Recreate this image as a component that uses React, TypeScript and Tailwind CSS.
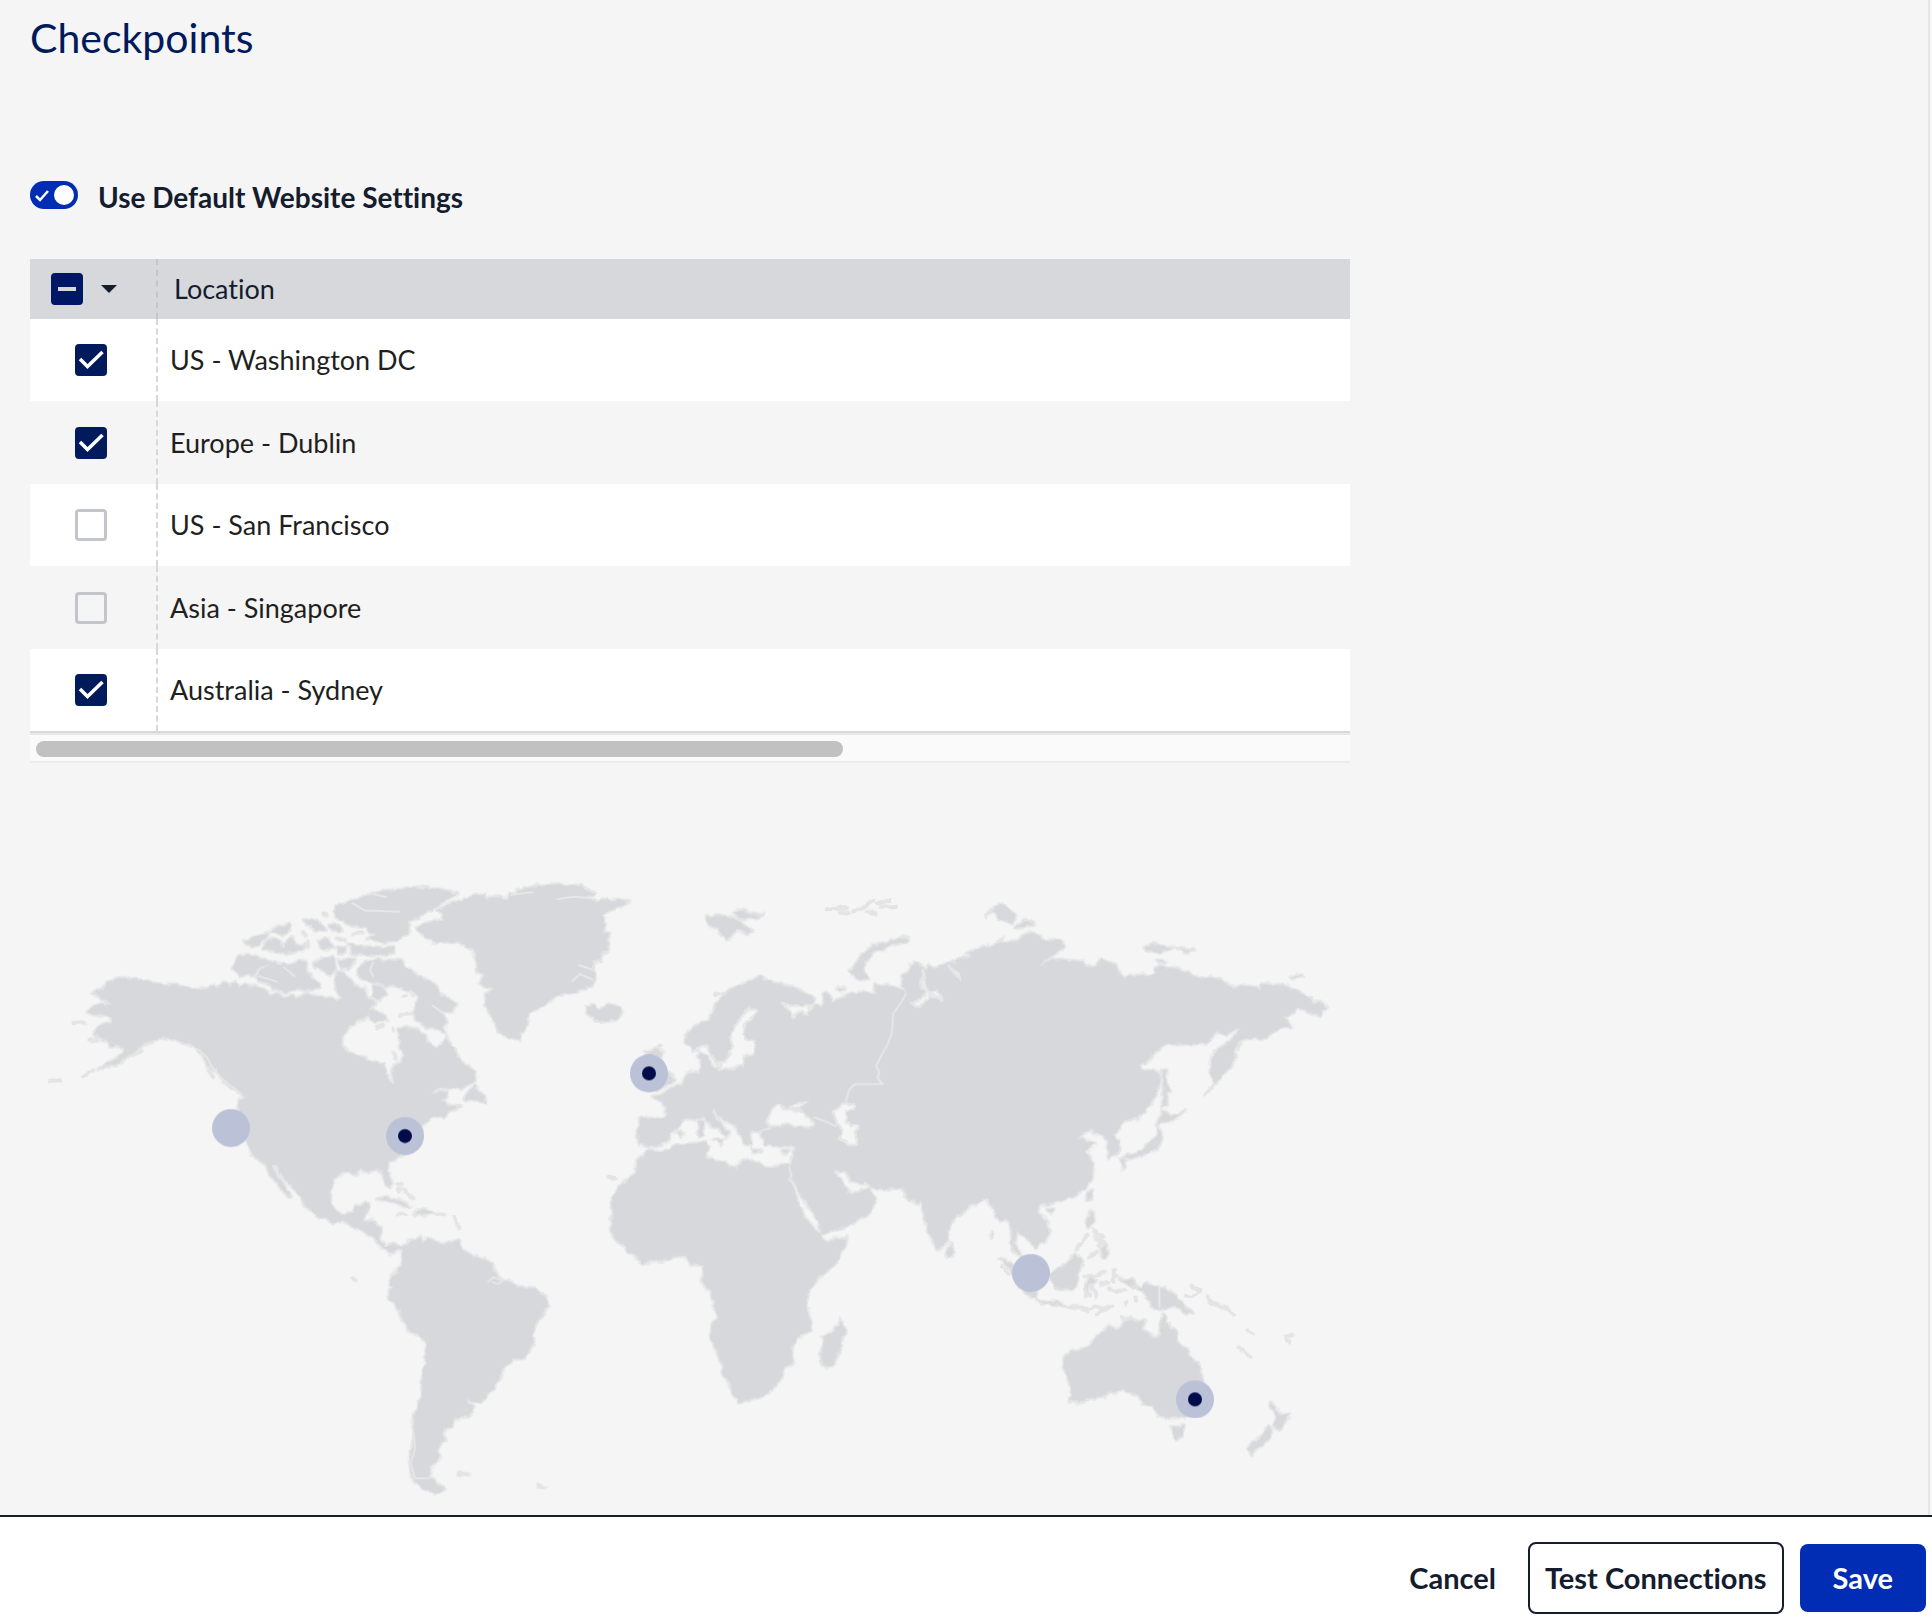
import { useEffect, useRef, useState } from 'react';

interface Checkpoint {
  id: string;
  name: string;
  enabled: boolean;
  x: number;
  y: number;
}

const CHECKPOINTS: Checkpoint[] = [
  { id: 'us-dc', name: 'US - Washington DC', enabled: true, x: 1125, y: 798 },
  { id: 'eu-dublin', name: 'Europe - Dublin', enabled: true, x: 1857, y: 610 },
  { id: 'us-sf', name: 'US - San Francisco', enabled: false, x: 603, y: 774 },
  { id: 'asia-sg', name: 'Asia - Singapore', enabled: false, x: 3003, y: 1209 },
  { id: 'au-sydney', name: 'Australia - Sydney', enabled: true, x: 3495, y: 1588 },
];

interface Region {
  origin: string;
  paths: string[];
}

// Land masses, each region drawn in its own local coordinates
const LAND: Region[] = [
  {
    // North America and the Arctic islands
    origin: 'translate(30 0)',
    paths: [
      'M258 320L272 330 290 326 310 336 330 335 365 344 400 343 440 352 472 362 480 354 500 356 520 346 535 350 558 334 570 350 582 338 595 350 620 345 650 350 680 362 690 375 720 374 740 382 760 378 764 386 800 372 830 380 870 382 893 394 903 380 890 365 885 335 890 308 905 304 925 325 945 350 975 358 980 380 1005 400 980 415 1000 425 975 445 950 455 920 480 905 505 905 525 925 552 960 558 1000 578 1035 585 1037 615 1055 640 1062 635 1055 605 1065 585 1085 578 1090 555 1078 530 1080 500 1075 475 1100 470 1130 480 1155 495 1167 520 1190 535 1208 520 1218 500 1235 528 1250 550 1258 572 1285 590 1305 605 1310 630 1285 642 1260 655 1225 652 1195 657 1170 677 1200 668 1225 665 1218 680 1205 690 1225 704 1250 710 1210 735 1175 738 1158 758 1150 765 1140 790 1100 850 1050 875 1040 900 1055 935 1050 955 1035 940 1028 908 1015 897 1000 902 960 900 948 912 930 905 910 905 880 928 875 960 870 990 885 1022 905 1035 940 1025 950 1003 985 1000 980 1025 967 1055 995 1053 1023 1070 1018 1105 1035 1130 1065 1122 1090 1142 1075 1142 1050 1147 1025 1130 1000 1100 980 1087 945 1075 915 1053 880 1057 830 1035 795 1012 792 990 770 965 745 940 720 910 705 886 694 890 710 915 735 950 750 978 738 975 722 955 708 935 692 918 686 905 670 878 640 855 625 820 604 780 598 715 595 688 612 680 590 660 560 645 540 618 530 600 515 600 505 588 490 560 470 535 440 518 400 508 365 500 340 515 305 525 285 545 250 570 210 588 175 597 215 575 250 550 255 532 235 526 215 530 205 515 185 510 160 490 175 470 212 455 214 440 190 432 165 435 140 425 155 410 190 402 215 403 190 390 180 375 155 370 190 355 200 340 225 330Z',
      'M595 258L625 254 650 260 680 270 700 278 665 290 650 300 640 318 615 312 600 318 580 300Z',
      'M655 305L690 282 705 275 740 290 765 280 775 272 800 275 798 300 815 325 835 340 840 355 800 362 770 352 740 366 700 358 690 345 655 335 650 320Z',
      'M880 125L900 102 925 98 945 90 975 78 1010 72 1040 62 1080 60 1100 54 1160 53 1205 62 1250 73 1210 95 1180 115 1150 135 1110 152 1105 185 1075 210 1030 215 980 205 1010 190 985 185 980 172 940 168 920 155 890 145Z',
      'M925 222L960 230 1030 232 1060 230 1062 248 1020 255 935 252Z',
      'M970 280L1000 270 1085 272 1095 290 1125 310 1165 335 1190 348 1195 368 1225 385 1250 402 1235 425 1205 425 1222 460 1210 468 1216 488 1185 478 1150 465 1125 445 1120 430 1130 405 1135 385 1115 365 1080 350 1050 350 990 335 960 325 955 300Z',
      'M612 218L640 200 685 188 680 205 655 220 640 232Z',
      'M690 183L720 168 750 163 748 182 725 193Z',
      'M668 235L690 205 715 215 728 232 755 200 765 225 795 225 790 240 735 250 695 243Z',
      'M790 150L830 150 858 180 830 180 805 165Z',
      'M820 280L845 266 880 265 888 300 870 315 850 300 828 295Z',
      'M895 268L945 266 925 295 905 295Z',
      'M835 212L865 206 878 235 845 235Z',
      'M865 165L900 170 905 182 875 180Z',
      'M888 232L915 230 912 248 895 252Z',
      'M990 415L1030 435 1040 450 1010 455 990 450Z',
      'M1000 345L1030 350 1040 372 1020 392 1000 385Z',
    ],
  },
  {
    // Greenland, Newfoundland, Iceland
    origin: 'translate(990 0)',
    paths: [
      'M172 172L200 158 250 150 245 130 230 120 262 105 290 95 310 85 340 78 370 75 375 90 388 80 410 78 440 88 445 72 480 72 470 62 520 50 560 44 600 42 660 48 705 68 680 80 715 100 740 90 808 95 770 112 740 125 725 138 735 160 730 185 745 190 738 215 745 240 720 255 722 270 700 275 700 300 706 328 695 345 650 365 595 373 580 388 540 412 510 430 500 455 485 485 475 512 440 500 415 480 395 450 385 420 372 405 376 375 400 358 372 350 360 338 372 315 355 310 350 270 338 240 315 224 285 215 215 215 188 195Z',
      'M312 688L330 660 348 645 352 660 375 678 376 698 350 690Z',
      'M242 735L270 715 305 710 270 726 250 740Z',
      'M690 440L678 430 680 408 700 408 715 418 745 405 770 410 788 428 770 445 735 455 705 448Z',
    ],
  },
  {
    // Europe, western Asia, India
    origin: 'translate(1650 0)',
    paths: [
      'M320 490L345 470 385 452 400 430 405 405 430 380 455 355 480 345 510 332 540 322 575 335 600 342 660 360 695 380 700 400 680 410 640 406 610 398 628 415 632 440 655 425 685 432 705 408 725 412 735 390 728 370 750 375 760 395 800 375 840 365 890 370 885 345 905 345 940 350 980 370 965 345 965 320 985 310 990 285 1005 277 1030 290 1032 305 1048 285 1060 300 1090 290 1100 280 1130 280 1150 265 1180 265 1160 250 1200 235 1260 222 1320 218 1320 985 1220 988 1175 998 1140 1030 1105 1060 1103 1115 1075 1140 1060 1115 1042 1075 1030 1030 1025 992 1010 1002 995 988 980 975 960 952 910 957 870 950 875 968 890 990 870 1025 820 1060 725 1092 715 1050 680 1000 650 950 630 922 630 885 645 825 620 828 600 832 585 825 555 825 545 800 548 782 515 780 505 795 512 825 500 825 485 800 470 775 440 755 412 735 403 715 396 728 415 752 448 785 440 806 425 785 395 770 370 738 345 748 310 745 300 765 270 792 262 808 245 822 205 830 192 822 178 822 172 790 180 745 215 742 252 745 258 715 245 695 215 680 240 676 255 668 285 650 305 642 325 608 360 605 365 590 355 560 360 545 380 525 335 542 322 520Z',
      'M380 140L430 138 455 145 480 155 520 185 505 195 470 175 445 208 425 195 410 175 385 165Z',
      'M460 130L485 120 505 130 550 132 520 145 480 145Z',
      'M806 308L830 280 850 250 880 225 930 215 980 202 985 212 920 230 880 245 855 275 850 305 865 328 830 325Z',
      'M240 600L262 605 275 622 285 632 262 645 230 660 215 640Z',
      'M195 545L225 535 248 550 235 570Z',
      'M358 752L370 752 370 795 358 798Z',
      'M400 808L428 812 425 824Z',
      'M290 788L310 787 302 798Z',
      'M512 838L545 843 520 848Z',
      'M605 845L628 840 615 852Z',
      'M770 355L795 355 785 365Z',
      'M1098 1150L1112 1120 1122 1145 1115 1160 1105 1162Z',
    ],
  },
  {
    // Africa and Madagascar
    origin: 'translate(1650 690)',
    paths: [
      'M205 150L222 152 250 152 290 135 345 130 380 128 388 140 378 168 410 182 430 185 450 200 470 208 485 182 510 180 540 195 570 202 600 196 627 195 632 220 625 240 650 290 665 335 690 375 722 402 730 422 800 412 795 440 770 485 720 530 680 580 680 610 690 650 690 690 650 715 630 745 640 790 612 800 605 835 570 875 540 895 500 900 475 908 460 885 455 865 430 820 420 770 392 715 395 680 412 650 405 610 390 575 365 545 372 495 330 488 315 468 290 468 245 483 225 480 190 488 165 470 135 450 125 430 98 405 92 380 100 340 95 305 110 270 130 245 165 220 170 185Z',
      'M783 658L795 690 778 750 760 795 740 803 727 795 722 765 732 740 728 710 765 690Z',
    ],
  },
  {
    // Eastern Asia and Japan
    origin: 'translate(2790 0)',
    paths: [
      'M-60 300L0 265 35 262 20 250 60 235 90 230 120 218 180 212 190 195 220 186 240 200 250 210 300 212 315 230 290 250 260 266 230 288 265 272 300 268 360 275 375 285 410 285 425 268 440 275 470 285 475 310 495 325 510 312 550 318 585 312 582 295 610 290 640 295 680 305 715 325 755 322 785 328 800 348 850 350 875 345 900 360 905 342 950 345 980 350 1020 370 1050 385 1060 402 1085 398 1105 410 1088 420 1080 438 1050 428 1035 418 1010 415 985 435 970 435 995 468 950 480 905 508 880 502 860 508 835 515 825 540 828 565 795 610 762 640 750 600 755 560 780 535 810 515 835 485 845 472 830 478 800 492 775 485 750 505 735 520 700 522 620 522 600 535 580 550 560 575 540 588 555 602 580 600 600 612 595 660 570 705 535 745 500 750 480 770 460 793 475 815 475 845 448 862 445 820 430 795 400 790 395 778 375 788 355 802 375 812 405 820 375 845 395 870 402 895 395 925 375 955 340 980 275 997 240 1005 232 1025 260 1055 268 1090 250 1115 225 1132 205 1105 170 1085 160 1120 185 1160 165 1150 155 1120 155 1080 140 1045 120 1055 100 1015 80 988 35 1000 0 1035 -100 1000Z',
      'M90 118L125 103 145 118 170 140 160 158 115 148 110 130Z',
      'M165 175L195 148 225 162 195 170Z',
      'M556 235L570 222 600 228 640 232 600 245 570 245Z',
      'M652 235L698 242 685 247Z',
      'M590 268L620 275 605 280Z',
      'M992 322L1012 314 1028 320Z',
      'M608 600L616 600 620 640 628 665 616 672 618 705 608 710 610 660Z',
      'M606 722L630 738 655 735 678 718 650 745 612 758 588 765 600 745Z',
      'M595 770L605 795 592 835 560 850 505 866 492 860 540 845 570 815 590 800Z',
      'M480 865L500 872 490 898 483 885Z',
      'M398 960L395 985 380 988 382 970Z',
      'M260 1015L282 1015 270 1032Z',
      'M398 1020L402 1055 385 1075 380 1050 388 1028Z',
      'M95 1085L97 1100 92 1105Z',
      'M425 1130L440 1125 443 1150 435 1165 422 1150Z',
    ],
  },
  {
    // South America and the Caribbean
    origin: 'translate(510 750)',
    paths: [
      'M605 392L612 380 625 365 650 358 662 350 668 372 680 352 700 368 740 370 775 362 778 382 820 410 855 415 880 440 888 462 905 480 940 488 955 500 1000 505 1020 522 1040 530 1046 555 1025 585 1005 615 1000 660 990 690 972 714 940 718 908 742 905 768 880 802 860 825 845 848 822 848 802 835 820 870 805 888 760 898 755 920 735 925 732 960 708 990 722 1010 690 1045 690 1070 710 1095 735 1108 705 1120 660 1100 642 1080 632 1050 628 1000 638 985 640 920 645 880 665 825 668 760 676 735 680 665 660 650 625 630 610 600 590 560 568 532 568 515 580 502 570 495 575 470 603 440Z',
      'M530 238L560 230 600 242 632 260 605 258 575 242Z',
      'M640 282L655 268 680 268 702 280 668 286Z',
    ],
  },
  {
    // Indonesia, Australia, New Zealand
    origin: 'translate(2850 930)',
    paths: [
      'M250 560L252 535 275 515 330 500 345 475 365 455 390 440 415 450 430 425 460 418 475 425 495 422 482 450 510 465 530 478 542 465 545 420 550 402 570 445 585 455 590 485 630 525 660 560 667 600 660 640 650 660 610 712 590 708 570 714 535 705 520 675 490 672 475 645 460 640 430 630 380 642 350 655 320 658 290 668 268 660 275 650 272 620 262 590Z',
      'M575 738L590 745 612 735 605 770 590 776 582 765Z',
      'M868 665L885 682 900 705 928 705 915 725 898 748 882 738 892 715Z',
      'M865 740L880 755 850 795 830 800 815 822 803 803 840 775Z',
      'M455 318L480 322 490 310 540 322 575 335 605 365 612 380 640 400 615 398 585 375 560 385 540 388 510 378 515 365 485 332Z',
      'M425 300L450 298 470 315 450 318Z',
      'M210 285L225 272 245 262 270 240 288 220 305 240 298 270 292 300 278 328 255 325 225 322Z',
      'M60 235L90 248 130 290 165 335 170 352 155 352 110 310 90 265Z',
      'M170 360L230 368 260 380 235 375 190 368Z',
      'M330 290L318 320 328 345 322 315 345 310Z',
    ],
  },
];

// Seas and bays that cut into the land
const WATER: Region[] = [
  {
    origin: 'translate(1650 0)',
    paths: [
      'M380 525L395 560 410 580 430 575 445 560 460 525 450 490 470 460 490 430 505 418 535 420 525 437 495 460 492 505 525 515 520 550 492 558 485 588 440 598 415 600 425 585 405 590 395 580 385 560 360 545 340 542Z',
      'M560 755L575 720 595 703 618 715 640 725 660 722 690 745 705 765 690 772 650 768 620 762 600 768 570 768Z',
      'M632 714L655 700 680 695 660 714 645 718Z',
      'M760 722L800 700 822 700 820 716 795 725 800 755 835 770 825 785 832 825 805 825 780 803 788 782 765 745Z',
      'M770 905L790 903 812 932 845 945 855 938 865 952 835 965 808 967 790 935Z',
      'M1028 300L1036 350 1048 378 1030 400 1015 408 990 402 1022 388 1036 370 1024 345Z',
      'M1048 370L1070 362 1090 386 1072 380Z',
      'M1105 290L1135 310 1140 332 1125 315Z',
      'M605 398L640 410 690 408 685 430 655 425 640 440 630 420Z',
    ],
  },
];

const BORDERS: Region[] = [
  {
    origin: 'translate(1650 0)',
    paths: [
      'M978 370L962 400 940 430 935 490 922 525 905 555 888 588 898 605 893 625 908 642 825 642 808 658 797 695',
      'M700 742L740 755 770 770',
      'M545 780L575 774',
      'M627 888L635 922',
    ],
  },
  { origin: 'translate(2850 930)', paths: ['M538 322V384'] },
  {
    origin: 'translate(30 0)',
    paths: [
      'M935 98L975 122 1010 122 1080 125',
      'M1000 72L1040 82',
      'M1000 275L990 300 1000 322',
      'M470 535L500 562 515 590 545 625 575 650 605 672',
      'M655 318L712 335',
      'M730 290L765 320',
    ],
  },
  {
    origin: 'translate(990 0)',
    paths: ['M590 88L640 80 690 84', 'M635 335L660 312 700 330', 'M655 285L700 300', 'M215 405L250 430', 'M450 75L520 66'],
  },
  { origin: 'translate(510 750)', paths: ['M862 488L880 472 908 482 895 492 875 486', 'M640 935L645 985 632 1030 645 1075 690 1075'] },
];

// Islands too small to be filled
const ISLETS: Region[] = [
  {
    origin: 'translate(30 0)',
    paths: [
      'M32 632H58',
      'M130 615L160 603',
      'M100 455L130 460',
      'M148 510L170 510',
      'M280 555L305 543',
      'M505 600L520 622',
      'M850 132L860 136',
      'M940 190L965 190',
      'M890 205L915 210',
      'M788 188L798 196',
      'M802 215L805 235',
      'M1015 472L1030 466',
      'M1058 478V484',
      'M1062 548L1070 568',
      'M1080 435L1120 432',
      'M1090 380L1102 378',
    ],
  },
  {
    origin: 'translate(1650 0)',
    paths: [
      'M740 118L800 115 M780 128L805 128',
      'M820 125L860 105 880 90 M860 125L890 130 M900 110L945 108 M890 100L930 92',
      'M85 920L108 924',
      'M235 530L242 526',
      'M18 415L40 408',
      'M405 375L450 365',
      'M460 545L470 540',
    ],
  },
  {
    origin: 'translate(510 750)',
    paths: [
      'M458 478L468 480',
      'M590 190L605 192 M598 205L600 220 M612 210L640 236',
      'M595 284L615 285',
      'M710 284L734 284',
      'M765 290L775 325',
      'M775 1060L808 1063',
      'M1015 1098L1035 1105',
    ],
  },
  {
    origin: 'translate(2850 930)',
    paths: [
      'M320 168L292 205',
      'M340 155L365 165 M345 180L375 190 M355 195L370 205 M325 232L350 215',
      'M315 288L350 288 375 275 M320 310L352 305 M335 320L350 348 M318 315L318 348',
      'M402 270L400 305 M402 288L410 290',
      'M365 312L385 312 M385 328L435 330 M418 300L460 300',
      'M265 380L330 384 395 380 M310 392L325 398 M350 403L378 388',
      'M435 372L440 368 M468 352V362',
      'M615 350L640 350 660 330 635 320',
      'M680 350L700 372 730 380 M735 380L757 403',
      'M805 450L820 463',
      'M775 503L812 530',
      'M918 470L940 465 M918 482L930 488',
      'M68 262L88 284',
      'M425 412L450 412',
    ],
  },
  { origin: 'translate(2790 0)', paths: ['M75 138L90 125', 'M735 672L765 640', 'M110 215L130 203', 'M835 535L842 520', 'M400 1080L430 1100 M405 1100L430 1120'] },
];

function Regions({ items }: { items: Region[] }) {
  return (
    <>
      {items.map((region, i) => (
        <g key={i} transform={region.origin}>
          {region.paths.map((d, j) => (
            <path key={j} d={d} />
          ))}
        </g>
      ))}
    </>
  );
}

function WorldMap({ points }: { points: Checkpoint[] }) {
  return (
    <svg viewBox="0 0 3960 1935" className="block w-full" role="img" aria-label="Checkpoint map">
      {/* Breaks the straight segments up into a ragged coastline */}
      <filter id="coast" filterUnits="userSpaceOnUse" x="0" y="0" width="3960" height="1935" colorInterpolationFilters="sRGB">
        <feTurbulence type="fractalNoise" baseFrequency="0.04" numOctaves="2" seed="4" result="noise" />
        <feDisplacementMap in="SourceGraphic" in2="noise" scale="18" xChannelSelector="R" yChannelSelector="G" />
      </filter>
      <g filter="url(#coast)">
        <g fill="#e6e6e7" stroke="#e6e6e7" strokeWidth="12" strokeLinejoin="round">
          <Regions items={LAND} />
        </g>
        <g fill="none" stroke="#e4e4e5" strokeWidth="12" strokeLinejoin="round" strokeLinecap="round">
          <Regions items={ISLETS} />
        </g>
        <g fill="#d7d8dc">
          <Regions items={LAND} />
        </g>
        <g fill="#f5f5f5" stroke="#e6e6e7" strokeWidth="7" strokeLinejoin="round">
          <Regions items={WATER} />
        </g>
      </g>
      <g fill="none" stroke="#e6e6e7" strokeWidth="6" strokeLinejoin="round">
        <Regions items={BORDERS} />
      </g>
      {points.map((point) => (
        <g key={point.id}>
          <circle cx={point.x} cy={point.y} r="57" fill="#bbc1d6" />
          {point.enabled && <circle cx={point.x} cy={point.y} r="21" fill="#020c4a" />}
        </g>
      ))}
    </svg>
  );
}

interface CheckboxProps {
  label: string;
  checked: boolean;
  mixed?: boolean;
  onChange: () => void;
}

function Checkbox({ label, checked, mixed = false, onChange }: CheckboxProps) {
  const ref = useRef<HTMLInputElement>(null);

  useEffect(() => {
    if (ref.current) ref.current.indeterminate = mixed;
  }, [mixed]);

  return (
    <span className="relative block size-8">
      <input
        ref={ref}
        type="checkbox"
        aria-label={label}
        checked={checked}
        onChange={onChange}
        className="block size-8 appearance-none rounded border-3 border-[#c4c5ca] checked:border-[#001a5c] checked:bg-[#001a5c] indeterminate:border-[#001766] indeterminate:bg-[#001766]"
      />
      {(checked || mixed) && (
        <svg viewBox="0 0 32 32" className="pointer-events-none absolute inset-0 size-8" fill="none">
          {mixed ? (
            <path d="M7 16H25" stroke="#d7d8dc" strokeWidth="4" />
          ) : (
            <path d="M5 15L12.500 22.500L27.500 8" stroke="#fff" strokeWidth="3.500" />
          )}
        </svg>
      )}
    </span>
  );
}

export default function App() {
  const [useDefaults, setUseDefaults] = useState(true);
  const [points, setPoints] = useState(CHECKPOINTS);

  const allOn = points.every((p) => p.enabled);
  const someOn = points.some((p) => p.enabled);

  const toggle = (id: string) => {
    setPoints(points.map((p) => (p.id === id ? { ...p, enabled: !p.enabled } : p)));
  };

  const toggleAll = () => {
    setPoints(points.map((p) => ({ ...p, enabled: !allOn })));
  };

  return (
    <div className="flex min-h-screen flex-col bg-[#f5f5f5] font-[Lato,sans-serif] text-[#141c2e] [font-variant-ligatures:none]">
      <main className="mr-[2px] flex-1 border-r-2 border-[#e6e6e6] px-[30px]">
        <h1 className="pt-4 text-[41px] leading-[44px] text-[#001a5c]">Checkpoints</h1>

        <div className="mt-[115px] flex items-center gap-5">
          <span className="relative block h-7 w-12">
            <input
              id="use-defaults"
              type="checkbox"
              role="switch"
              checked={useDefaults}
              onChange={() => setUseDefaults(!useDefaults)}
              className="block h-7 w-12 appearance-none rounded-full bg-[#c4c5ca] checked:bg-[#002db3]"
            />
            <svg viewBox="0 0 48 28" className="pointer-events-none absolute inset-0 h-7 w-12" fill="none">
              <circle cx={useDefaults ? 34 : 14} cy="14" r="10" fill="#fff" />
              {useDefaults && <path d="M6 15L10 19L18 10" stroke="#fff" strokeWidth="2.500" />}
            </svg>
          </span>
          <label htmlFor="use-defaults" className="pt-1 text-[28px] leading-9 font-bold">
            Use Default Website Settings
          </label>
        </div>

        <div className="mt-[44px] max-w-[1320px]">
          <table className="w-full border-collapse text-left text-[27px] leading-8">
            <thead>
              <tr className="h-[60px] bg-[#d7d8dc]">
                <th className="w-[127px] border-r-2 border-dashed border-[#c4c5ca] p-0 pl-[21px]">
                  <div className="flex items-center gap-[18px]">
                    <Checkbox label="Select all locations" checked={allOn} mixed={someOn && !allOn} onChange={toggleAll} />
                    <button type="button" aria-label="Selection options">
                      <svg viewBox="0 0 16 8" className="block h-2 w-4" fill="#141c2e">
                        <path d="M0 0H16L8 8Z" />
                      </svg>
                    </button>
                  </div>
                </th>
                <th className="p-0 pl-4 font-normal">Location</th>
              </tr>
            </thead>
            <tbody>
              {points.map((point) => (
                <tr key={point.id} className="odd:h-[82px] odd:bg-white even:h-[83px]">
                  <td className="border-r-2 border-dashed border-[#d7d8dc] p-0 pl-[45px]">
                    <Checkbox label={point.name} checked={point.enabled} onChange={() => toggle(point.id)} />
                  </td>
                  <td className="p-0 pl-3 text-[#1f1f21]">{point.name}</td>
                </tr>
              ))}
            </tbody>
          </table>
          <div className="border-t-2 border-[#d7d7dc]">
            <div className="border-y-2 border-t-[#e8e8e8] border-b-[#ececec] bg-[#fafafa] px-[6px] pt-[6px] pb-1">
              <div className="h-4 w-[61.7%] rounded-full bg-[#c1c1c1]" />
            </div>
          </div>
        </div>

        <div className="mt-[107px] max-w-[1320px]">
          <WorldMap points={points} />
        </div>
      </main>

      <footer className="flex items-center justify-end gap-4 border-t-2 border-[#141c2e] bg-white pt-[25px] pr-[6px] pb-2 text-[29px] leading-9 font-bold">
        <button type="button" className="px-4">
          Cancel
        </button>
        <button type="button" className="rounded-lg border-2 border-[#141c2e] px-[15px] py-4">
          Test Connections
        </button>
        <button type="button" className="rounded-lg bg-[#002db3] px-[33px] py-4 text-white">
          Save
        </button>
      </footer>
    </div>
  );
}
